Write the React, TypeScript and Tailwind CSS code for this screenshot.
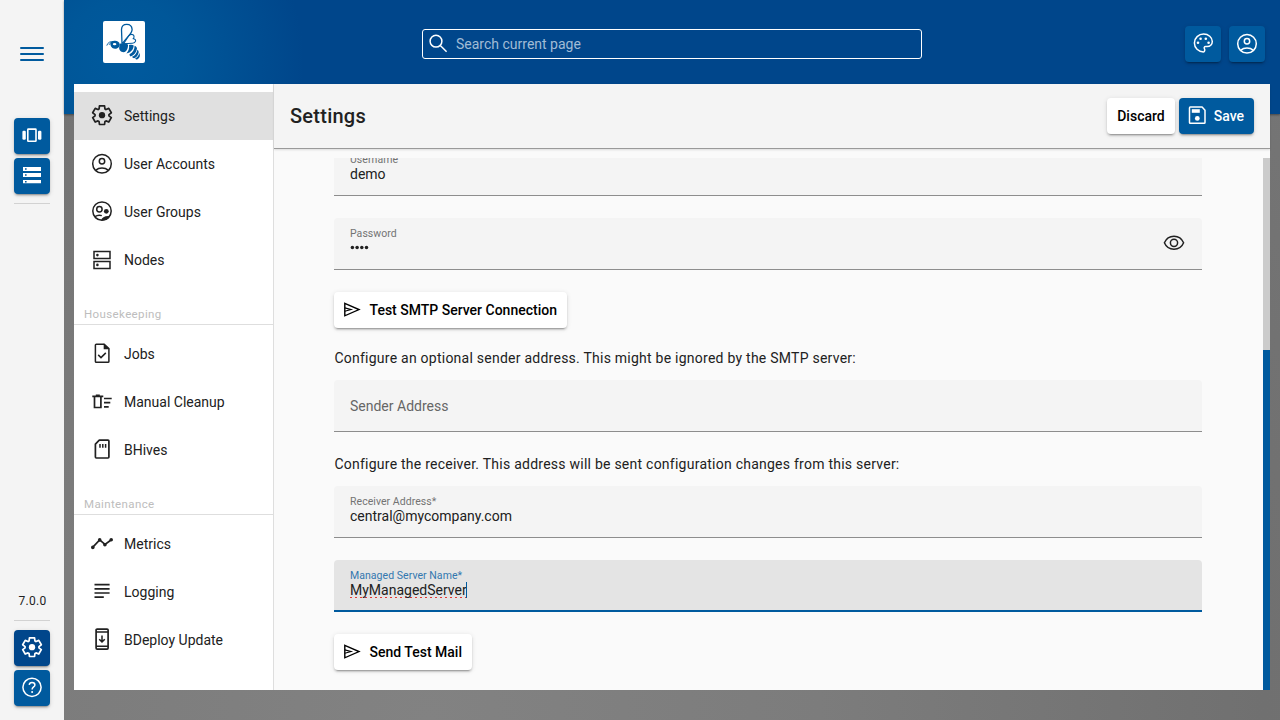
import type { ReactNode } from 'react';

type IconProps = { size?: number; children: ReactNode; className?: string };

function Icon({ size = 24, children, className = '' }: IconProps) {
  return (
    <svg
      width={size}
      height={size}
      viewBox="0 0 24 24"
      fill="none"
      stroke="currentColor"
      strokeWidth={1.5}
      className={`shrink-0 ${className}`}
    >
      {children}
    </svg>
  );
}

const Gear = () => (
  <Icon>
    <g transform="translate(0.87 22.34) scale(0.0232)">
      <path
        strokeWidth="74"
        strokeLinejoin="round"
        d="m370-80-16-128q-13-5-24.5-12T307-235l-119 50L78-375l103-78q-1-7-1-13.5v-27q0-6.5 1-13.5L78-585l110-190 119 50q11-8 23-15t24-12l16-128h220l16 128q13 5 24.5 12t22.5 15l119-50 110 190-103 78q1 7 1 13.5v27q0 6.5-2 13.5l103 78-110 190-118-50q-11 8-23 15t-24 12L590-80H370Z"
      />
      <circle cx="480" cy="-480" r="136" fill="currentColor" stroke="none" />
    </g>
  </Icon>
);

const Account = () => (
  <Icon>
    <circle cx="12" cy="11.8" r="9.3" />
    <circle cx="12" cy="9.2" r="2.7" />
    <path d="M5.9 18.1C9 15.4 15 15.4 18.1 18.1" />
  </Icon>
);

const Groups = () => (
  <Icon>
    <circle cx="12" cy="11.1" r="9.2" />
    <circle cx="9.4" cy="9.3" r="2.7" />
    <circle cx="16.3" cy="11.3" r="2.4" fill="currentColor" stroke="none" />
    <path d="M5 16.6C7 15.2 9.6 14.9 11.8 15.6" />
    <path d="M11 20.5C12 17.3 15.5 15.5 19.8 16.2C18.2 19 15 21 11 20.5Z" fill="currentColor" stroke="none" />
  </Icon>
);

const Nodes = () => (
  <Icon>
    <rect x="4" y="3.5" width="16" height="7" />
    <rect x="4" y="13.5" width="16" height="7" />
    <circle cx="7.4" cy="7.1" r="1.3" fill="currentColor" stroke="none" />
    <circle cx="7.4" cy="16.9" r="1.3" fill="currentColor" stroke="none" />
  </Icon>
);

const Jobs = () => (
  <Icon>
    <path d="M14.2 2.2H6.3Q5.4 2.2 5.4 3.1V19.4Q5.4 20.3 6.3 20.3H18Q18.9 20.3 18.9 19.4V6.6Z" />
    <path d="M13.7 1.5L19.6 7.3H13.7Z" fill="currentColor" stroke="none" />
    <path d="M8.2 12.9L11 15.6L15.8 10.9" />
  </Icon>
);

const Cleanup = () => (
  <Icon>
    <g strokeWidth="1.7">
      <path d="M2.3 6.3H13.3M5.8 5.4H9.8M4.5 6.5V17.5H10.9V6.5" />
      <path d="M14 8.5H21.7M14 12.6H20.3M14 16.8H18.7" />
    </g>
  </Icon>
);

const Hive = () => (
  <Icon>
    <path d="M9.3 2.2H18Q18.9 2.2 18.9 3.1V19.1Q18.9 20 18 20H6.3Q5.4 20 5.4 19.1V6.2Z" strokeLinejoin="round" strokeWidth="1.7" />
    <path d="M10 6.1V9.7M12.8 6.1V9.7M15.6 6.1V9.7" />
  </Icon>
);

const Metrics = () => (
  <Icon>
    <path d="M2.6 15.4L9.7 7.9L15 12.5L21.4 7.8" strokeWidth="1.7" />
    <g fill="currentColor" stroke="none">
      <circle cx="2.8" cy="15.4" r="1.8" />
      <circle cx="9.7" cy="7.9" r="1.8" />
      <circle cx="14.9" cy="12.7" r="1.8" />
      <circle cx="21.2" cy="7.8" r="1.8" />
    </g>
  </Icon>
);

const Logging = () => (
  <Icon>
    <path d="M4.5 4.6H19.6M4.5 8.8H19.6M4.5 13H19.6M4.5 17.1H13.8" strokeWidth="1.7" />
  </Icon>
);

const Update = () => (
  <Icon>
    <rect x="6.1" y="1.1" width="12" height="20" rx="1" strokeWidth="1.7" />
    <path d="M6 4.1H18M6 18.2H18M12 7.4V13.8M9.2 11.2L12 13.9L14.8 11.2" />
  </Icon>
);

const Carousel = () => (
  <Icon>
    <rect x="7.8" y="5.1" width="8.2" height="12.2" rx="0.6" strokeWidth="1.6" />
    <rect x="2.4" y="6.8" width="3.4" height="9" rx="1.2" fill="currentColor" stroke="none" />
    <rect x="18" y="6.8" width="3.4" height="9" rx="1.2" fill="currentColor" stroke="none" />
  </Icon>
);

const Storage = () => (
  <Icon>
    <path
      fill="currentColor"
      stroke="none"
      fillRule="evenodd"
      d="M3 3H21V7H3ZM5 4.2V5.8H6.6V4.2ZM3 9H21V13H3ZM5 10.2V11.8H6.6V10.2ZM3 16H21V19.2H3ZM5 17V18.4H6.6V17Z"
    />
  </Icon>
);

const Help = () => (
  <Icon>
    <circle cx="12" cy="11.3" r="9.1" />
    <path d="M9.2 8.8C9.4 7.2 10.5 6.4 12 6.4C13.7 6.4 14.9 7.4 14.9 8.9C14.9 10.9 12.1 11 12.1 13.4" />
    <circle cx="12.1" cy="15.9" r="1" fill="currentColor" stroke="none" />
  </Icon>
);

const Palette = () => (
  <Icon>
    <g transform="translate(0.4 -0.6)">
      <path d="M12 20.5C7 20.5 3 16.5 3 11.6C3 6.4 7.2 2.7 12.2 2.7C17 2.7 20.9 5.9 20.9 10.2C20.9 13.2 18.6 15.1 15.8 15.1H14.2C12.9 15.1 12.4 16.3 13 17.3C13.8 18.6 13.2 20.5 12 20.5Z" />
      <g fill="currentColor" stroke="none">
        <circle cx="6.6" cy="11.3" r="1.3" />
        <circle cx="9.2" cy="7.4" r="1.3" />
        <circle cx="14.4" cy="7.4" r="1.3" />
        <circle cx="17.2" cy="11.3" r="1.3" />
      </g>
    </g>
  </Icon>
);

const Disk = () => (
  <Icon>
    <g transform="translate(0.3 0)">
      <path d="M16.8 3.1H5Q4.2 3.1 4.2 3.9V18.4Q4.2 19.2 5 19.2H18.9Q19.7 19.2 19.7 18.4V6.3Z" strokeLinejoin="round" />
      <path d="M6.5 5.2H14.5V8.8H6.5Z" fill="currentColor" stroke="none" />
      <circle cx="12" cy="14.4" r="2.4" fill="currentColor" stroke="none" />
    </g>
  </Icon>
);

const Send = () => (
  <Icon>
    <path d="M4.8 5.3L19 11.6L4.8 17.8Z" strokeWidth="1.4" />
    <path d="M4.8 9.9L11 11.5L4.8 13.2" strokeWidth="1.1" />
  </Icon>
);

const Eye = () => (
  <Icon>
    <path d="M2.4 11.8C6 3 18 3 21.6 11.8C18 20.4 6 20.4 2.4 11.8Z" />
    <circle cx="12" cy="11.8" r="3.6" />
  </Icon>
);

const SearchIcon = () => (
  <Icon className="text-white">
    <circle cx="10" cy="9.2" r="5.9" />
    <path d="M14.3 13.5L20.6 19.8" />
  </Icon>
);

function BeeLogo() {
  return (
    <div className="h-[42px] w-[42px] rounded-[2px] bg-white text-[#005a9e]">
      <svg width="42" height="42" viewBox="0 0 42 42" fill="none" stroke="currentColor" strokeWidth="1.3">
        <path d="M19 22.5L18.5 8.5C18.8 1.8 28.6 1.8 29.1 8.4C29.2 12.5 25 14.5 19.6 22.3" />
        <path d="M20.6 22.7L25.6 15C28.5 11.6 32.8 14.3 30.3 17.6C34 18.2 33 22.3 29.2 22.2L20.6 22.7" strokeWidth="1.1" />
        <path d="M3.8 24.6C4.5 21.5 7.6 20 11 20.6M6.2 23.8C6.5 22 8.6 20.8 11.2 21.2" strokeWidth="0.9" />
        <g fill="currentColor" stroke="none">
          <path d="M7.8 21.6C10.5 18.8 16.3 19.4 16.8 23.4C16.9 26.7 12.6 29 9.4 26.9C7.6 25.6 6.8 23.2 7.8 21.6Z" />
          <path d="M17 22.8C20 21 24 22.2 25.1 23.8C25 27.5 23.5 31 20.6 31.2C17.4 31.2 15.8 28.3 16.2 26.2Z" />
          <path d="M26 24C28 23.5 29.9 23.6 30.7 24.5C30.5 28 28 31.8 23.4 32.4C25.6 29.7 26.6 27.3 26 24Z" />
          <path d="M31.6 24.8C33.1 25.4 34 26.4 34 27.5C33.4 31.2 31.2 34.3 27.6 35.5C26.8 34.9 26.5 34.2 26.5 33.3C29.9 31.4 31.6 28.6 31.6 24.8Z" />
          <path d="M34.4 28.7C35.4 29.5 35.8 30.4 35.7 31.4C35 34.4 33.4 36.2 31.1 37.2C30 37 29.4 36.5 29.1 35.8C32 34.5 34 32 34.4 28.7Z" />
          <path d="M36.2 32.1C37.7 34.5 36.8 37.4 34 38.6C33.1 38.6 32.6 38.2 32.2 37.6C34.5 36.4 35.8 34.7 36.2 32.1Z" />
        </g>
        <ellipse cx="11.6" cy="23.2" rx="1.8" ry="1.1" fill="white" stroke="none" />
      </svg>
    </div>
  );
}

const shadow = 'shadow-[0_3px_1px_-2px_rgba(0,0,0,0.2),0_2px_2px_0_rgba(0,0,0,0.14),0_1px_5px_0_rgba(0,0,0,0.12)]';

function IconButton({ children, active = false }: { children: ReactNode; active?: boolean }) {
  return (
    <button
      className={`flex h-9 w-9 items-center justify-center rounded-[4px] text-white ${shadow} ${active ? 'bg-[#00468b]' : 'bg-[#005a9e]'}`}
    >
      {children}
    </button>
  );
}

function Rail() {
  return (
    <aside className="flex w-16 shrink-0 flex-col items-center bg-[#f4f4f4] pb-[14px]">
      <div className="mt-[47px] flex flex-col gap-1">
        <span className="h-[2px] w-6 rounded-full bg-[#005a9e]" />
        <span className="h-[2px] w-6 rounded-full bg-[#005a9e]" />
        <span className="h-[2px] w-6 rounded-full bg-[#005a9e]" />
      </div>
      <div className="mt-[57px] flex flex-col gap-1">
        <IconButton><Carousel /></IconButton>
        <IconButton><Storage /></IconButton>
      </div>
      <div className="mt-[9px] h-px w-9 bg-[#d2d2d2]" />
      <div className="mt-auto pl-px text-[12px] leading-4 tracking-[0.3px] text-[#222]">7.0.0</div>
      <div className="mt-[11px] mb-[9px] h-px w-9 bg-[#d2d2d2]" />
      <div className="flex flex-col gap-1">
        <IconButton active><Gear /></IconButton>
        <IconButton><Help /></IconButton>
      </div>
    </aside>
  );
}

function NavItem({ icon, label, active = false }: { icon: ReactNode; label: string; active?: boolean }) {
  return (
    <a className={`flex h-12 items-center gap-[10px] pl-4 text-[14px] text-[#212121] ${active ? 'bg-[#e0e0e0]' : ''}`}>
      {icon}
      <span>{label}</span>
    </a>
  );
}

function NavHeading({ children }: { children: ReactNode }) {
  return (
    <div className="mt-[21px] mb-[5px] border-b border-[#dedede] pb-px pl-[10px] text-[11.5px] leading-[18px] tracking-[0.38px] text-[#bdbdbd]">
      {children}
    </div>
  );
}

function Sidebar() {
  return (
    <nav className="w-[200px] shrink-0 border-r border-[#dedede] bg-white pt-2">
      <NavItem icon={<Gear />} label="Settings" active />
      <NavItem icon={<Account />} label="User Accounts" />
      <NavItem icon={<Groups />} label="User Groups" />
      <NavItem icon={<Nodes />} label="Nodes" />
      <NavHeading>Housekeeping</NavHeading>
      <NavItem icon={<Jobs />} label="Jobs" />
      <NavItem icon={<Cleanup />} label="Manual Cleanup" />
      <NavItem icon={<Hive />} label="BHives" />
      <NavHeading>Maintenance</NavHeading>
      <NavItem icon={<Metrics />} label="Metrics" />
      <NavItem icon={<Logging />} label="Logging" />
      <NavItem icon={<Update />} label="BDeploy Update" />
    </nav>
  );
}

type FieldProps = { label: string; focused?: boolean; trailing?: ReactNode; children: ReactNode };

function Field({ label, focused = false, trailing, children }: FieldProps) {
  return (
    <div
      className={`flex h-[52px] shrink-0 items-start justify-between rounded-t-[4px] px-4 ${
        focused ? 'border-b-2 border-[#005a9e] bg-[#e4e4e4]' : 'border-b border-[#8d8d8d] bg-[#f4f4f4]'
      }`}
    >
      <div className="pt-[9px]">
        <div className={`text-[10.5px] leading-[13px] tracking-[0.05px] ${focused ? 'text-[#3377af]' : 'text-[#737373]'}`}>{label}</div>
        <div className="flex h-4 items-center text-[14px] leading-4 text-[#212121]">{children}</div>
      </div>
      {trailing}
    </div>
  );
}

function MaskedValue() {
  return (
    <svg width="20" height="16" viewBox="0 0 20 16" fill="currentColor">
      <circle cx="2.4" cy="7.6" r="1.75" />
      <circle cx="7.1" cy="7.6" r="1.75" />
      <circle cx="11.8" cy="7.6" r="1.75" />
      <circle cx="16.5" cy="7.6" r="1.75" />
    </svg>
  );
}

function ActionButton({ children }: { children: ReactNode }) {
  return (
    <button
      className={`flex h-9 shrink-0 items-center gap-[5.5px] self-start rounded-[4px] bg-white pr-[10px] pl-[6px] text-[14px] font-medium text-black ${shadow}`}
    >
      <Send />
      <span>{children}</span>
    </button>
  );
}

function SettingsForm() {
  return (
    <div className="-mt-[14px] ml-[60px] flex w-[868px] flex-col">
      <Field label="Username">demo</Field>
      <div className="h-[22px] shrink-0" />
      <Field label="Password" trailing={<div className="mt-[13px] text-[#212121]"><Eye /></div>}>
        <MaskedValue />
      </Field>
      <div className="h-[22px] shrink-0" />
      <ActionButton>Test SMTP Server Connection</ActionButton>
      <p className="mt-5 mb-3 pl-[0.4px] text-[14px] leading-5 tracking-[0.245px] text-[#212121]">
        Configure an optional sender address. This might be ignored by the SMTP server:
      </p>
      <div className="flex h-[52px] shrink-0 items-center rounded-t-[4px] border-b border-[#8d8d8d] bg-[#f4f4f4] px-4 pt-px text-[14px] text-[#666]">
        Sender Address
      </div>
      <p className="mt-[22px] mb-3 pl-[0.4px] text-[14px] leading-5 tracking-[0.245px] text-[#212121]">
        Configure the receiver. This address will be sent configuration changes from this server:
      </p>
      <Field label="Receiver Address*">central@mycompany.com</Field>
      <div className="h-[22px] shrink-0" />
      <Field label="Managed Server Name*" focused>
        <span className="bg-[repeating-linear-gradient(90deg,#e53935_0_2px,transparent_2px_5px)] bg-[length:100%_1px] bg-bottom bg-no-repeat">
          MyManagedServer
        </span>
        <span className="-ml-px h-4 w-px bg-[#005a9e]" />
      </Field>
      <div className="h-[22px] shrink-0" />
      <ActionButton>Send Test Mail</ActionButton>
    </div>
  );
}

export default function App() {
  return (
    <div className="flex h-[720px] w-[1280px] overflow-hidden font-['Roboto',sans-serif]">
      <Rail />
      <main className="flex min-w-0 flex-1 flex-col bg-[radial-gradient(circle_at_30%_100%,#828282_0%,#7c7c7c_35%,#707070_75%,#767676_100%)]">
        <header className="flex h-[114px] shrink-0 items-start bg-[radial-gradient(circle_at_60px_60px,#005a9e_0px,#005799_60px,#00468b_180px)] pr-[15px] pl-[39px] shadow-[0_1px_2px_rgba(0,0,0,0.4)]">
          <div className="mt-[21px]"><BeeLogo /></div>
          <div className="mt-[29px] ml-[277px] flex h-[30px] w-[500px] items-center gap-[6px] rounded-[3px] border border-white pl-[3px] text-[14px] text-[#a0bcd6]">
            <SearchIcon />
            <span>Search current page</span>
          </div>
          <div className="mt-[26px] ml-auto flex gap-2">
            <IconButton><Palette /></IconButton>
            <IconButton><Account /></IconButton>
          </div>
        </header>
        <div className="relative -mt-[30px] ml-[10px] flex h-[606px] w-[1196px] bg-[#fafafa]">
          <Sidebar />
          <section className="flex min-w-0 flex-1 flex-col">
            <div className="flex h-[65px] shrink-0 items-center border-b border-[#999] bg-[#f4f4f4] pr-4 pl-4 shadow-[0_1px_2px_rgba(0,0,0,0.12)]">
              <h1 className="text-[20px] font-medium tracking-[0.25px] text-[#212121]">Settings</h1>
              <div className="ml-auto flex gap-1">
                <button className={`h-9 rounded-[4px] bg-white px-[10px] text-[14px] font-medium text-black ${shadow}`}>Discard</button>
                <button className={`flex h-9 items-center gap-[5px] rounded-[4px] bg-[#005a9e] pr-[10px] pl-[6px] text-[14px] font-medium text-white ${shadow}`}>
                  <Disk />
                  <span>Save</span>
                </button>
              </div>
            </div>
            <div className="mt-[9px] flex h-[532px] overflow-hidden">
              <SettingsForm />
              <div className="ml-auto flex h-full w-[7px] flex-col justify-end bg-[#cbcbcb]">
                <div className="h-[340px] bg-[#005a9e]" />
              </div>
            </div>
          </section>
        </div>
      </main>
    </div>
  );
}
